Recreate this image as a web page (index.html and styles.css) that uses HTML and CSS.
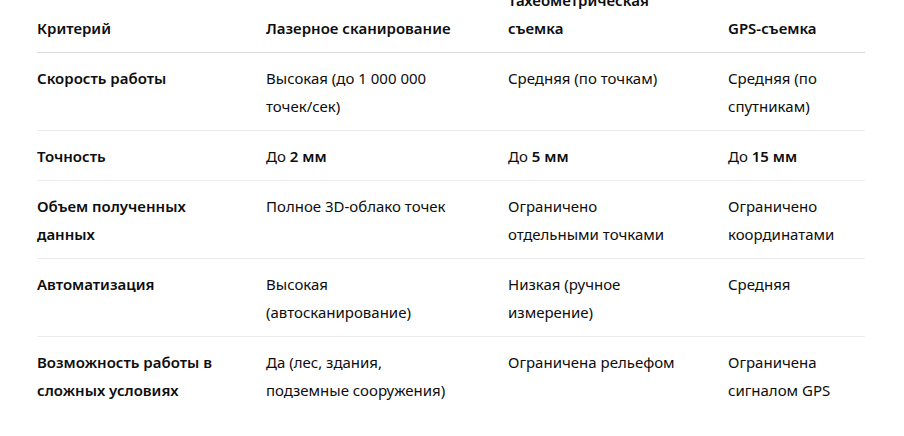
FILE: index.html
```html
<!DOCTYPE html>
<html lang="ru">
<head>
<meta charset="utf-8">
<link rel="stylesheet" href="styles.css">
</head>
<body>
<div class="wrap">
<table class="cmp">
<colgroup>
<col class="c1"><col class="c2"><col class="c3"><col class="c4">
</colgroup>
<thead>
<tr><th>Критерий</th><th>Лазерное&nbsp;сканирование</th><th>Тахеометрическая съемка</th><th>GPS-съемка</th></tr>
</thead>
<tbody>
<tr><td><strong>Скорость работы</strong></td><td>Высокая (до 1&nbsp;000&nbsp;000 точек/сек)</td><td>Средняя (по точкам)</td><td>Средняя (по спутникам)</td></tr>
<tr><td><strong>Точность</strong></td><td>До <strong>2 мм</strong></td><td>До <strong>5 мм</strong></td><td>До <strong>15 мм</strong></td></tr>
<tr><td><strong>Объем полученных данных</strong></td><td>Полное 3D-облако точек</td><td>Ограничено отдельными&nbsp;точками</td><td>Ограничено координатами</td></tr>
<tr><td><strong>Автоматизация</strong></td><td>Высокая (автосканирование)</td><td>Низкая (ручное измерение)</td><td>Средняя</td></tr>
<tr class="last"><td><strong>Возможность работы в сложных условиях</strong></td><td>Да (лес, здания, подземные&nbsp;сооружения)</td><td>Ограничена&nbsp;рельефом</td><td>Ограничена сигналом&nbsp;GPS</td></tr>
</tbody>
</table>
</div>
</body>
</html>
```
FILE: styles.css
```css
html, body {
  margin: 0;
  padding: 0;
  background: #ffffff;
}
body {
  font-family: "Noto Sans", "Open Sans", sans-serif;
  font-size: 15px;
  line-height: 28px;
  color: #0d0d0d;
}
.wrap {
  padding-left: 37px;
  margin-top: -24px;
}
.cmp {
  width: 828px;
  table-layout: fixed;
  border-collapse: collapse;
}
.c1 { width: 229px; }
.c2 { width: 242px; }
.c3 { width: 220px; }
.c4 { width: 137px; }
.cmp th {
  text-align: left;
  font-weight: 600;
  vertical-align: bottom;
  padding: 10px 0 10px 0;
  border-bottom: 1px solid #d9d9d9;
}
.cmp td {
  vertical-align: top;
  padding: 11px 0 10px 0;
  border-bottom: 1px solid #ececec;
}
.cmp th:nth-child(1), .cmp td:nth-child(1) { padding-right: 44px; }
.cmp th:nth-child(2), .cmp td:nth-child(2) { padding-right: 56px; }
.cmp th:nth-child(3), .cmp td:nth-child(3) { padding-right: 52px; }
.cmp th:nth-child(4), .cmp td:nth-child(4) { padding-right: 16px; }
.cmp tr.last td {
  border-bottom: none;
}
.cmp strong {
  font-weight: 600;
}
```
